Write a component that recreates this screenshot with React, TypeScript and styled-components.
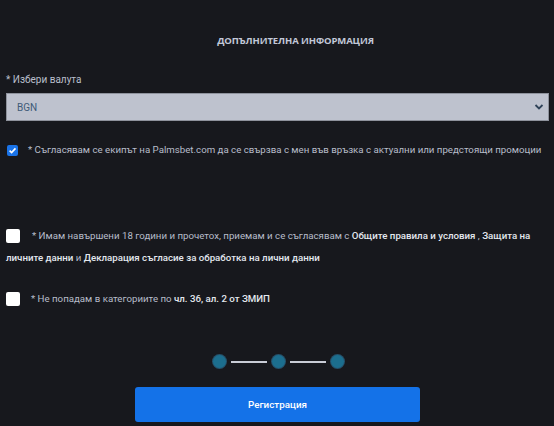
import React from "react";
import styled, { createGlobalStyle } from "styled-components";

const GlobalStyle = createGlobalStyle`
  html, body { margin: 0; padding: 0; background: #17181d; }
  body { font-family: Roboto, "Open Sans", sans-serif; }
`;

const Page = styled.div`
  width: 554px;
  height: 426px;
  box-sizing: border-box;
  padding: 0 5px 0 6px;
  display: flex;
  flex-direction: column;
  overflow: hidden;
`;

const Title = styled.div`
  margin-top: 34px;
  padding-left: 36px;
  text-align: center;
  font-family: "Open Sans", sans-serif;
  font-size: 9.5px;
  font-weight: 700;
  color: #c2c8d8;
  line-height: 14px;
  letter-spacing: -0.1px;
`;

const Label = styled.div`
  margin-top: 25px;
  font-size: 10px;
  line-height: 14px;
  color: #b9bfcc;
`;

const Select = styled.div`
  margin-top: 6px;
  height: 28px;
  box-sizing: border-box;
  border: 1px solid #8e929c;
  background: #bec2ce;
  display: flex;
  align-items: center;
  justify-content: space-between;
  padding: 0 4px 0 10px;
  font-size: 10px;
  color: #3f5b78;
`;

const Row = styled.div<{ $top: number; $gap: number }>`
  margin-top: ${(p) => p.$top}px;
  display: flex;
  align-items: center;
  gap: ${(p) => p.$gap}px;
  font-size: 9.7px;
  line-height: 14px;
  color: #b7bdca;
  white-space: nowrap;
`;

const Box = styled.span<{ $checked?: boolean }>`
  flex: none;
  width: ${(p) => (p.$checked ? 11 : 14)}px;
  height: ${(p) => (p.$checked ? 11 : 14)}px;
  margin-left: ${(p) => (p.$checked ? 1 : 0)}px;
  border-radius: 2px;
  background: ${(p) => (p.$checked ? "#1a73e8" : "#ffffff")};
  display: flex;
  align-items: center;
  justify-content: center;
`;

const Second = styled.div`
  margin-top: 8px;
  font-size: 9.7px;
  line-height: 14px;
  color: #b7bdca;
  white-space: nowrap;
`;

const B = styled.b`
  font-weight: 500;
  color: #e4e8ef;
`;

const Steps = styled.div`
  margin-top: 49px;
  padding-left: 2px;
  display: flex;
  align-items: center;
  justify-content: center;
`;

const Dot = styled.span`
  width: 13px;
  height: 13px;
  border-radius: 50%;
  background: #1c6e8e;
  box-shadow: 0 0 0 1px #26506a;
`;

const Line = styled.span`
  width: 36px;
  height: 2px;
  background: #c9ccd6;
  margin: 0 5px;
`;

const Button = styled.div`
  margin: 19px 0 0 129px;
  width: 285px;
  height: 35px;
  border-radius: 3px;
  background: #1472e8;
  color: #ffffff;
  font-size: 9.8px;
  font-weight: 500;
  display: flex;
  align-items: center;
  justify-content: center;
`;

export default function App() {
  return (
    <>
      <GlobalStyle />
      <Page>
        <Title>ДОПЪЛНИТЕЛНА ИНФОРМАЦИЯ</Title>
        <Label>* Избери валута</Label>
        <Select>
          <span>BGN</span>
          <svg width="10" height="8" viewBox="0 0 10 8">
            <path d="M1.5 2 L5 5.5 L8.5 2" stroke="#2f4258" strokeWidth="1.8" fill="none" />
          </svg>
        </Select>
        <Row $top={22} $gap={10}>
          <Box $checked>
            <svg width="9" height="9" viewBox="0 0 10 10">
              <path d="M1.8 5.2 L4 7.3 L8.3 2.6" stroke="#fff" strokeWidth="1.8" fill="none" />
            </svg>
          </Box>
          <span>* Съгласявам се екипът на Palmsbet.com да се свързва с мен във връзка с актуални или предстоящи промоции</span>
        </Row>
        <Row $top={72} $gap={12}>
          <Box />
          <span>
            * Имам навършени 18 години и прочетох, приемам и се съгласявам с <B>Общите правила и условия</B> , <B>Защита на</B>
          </span>
        </Row>
        <Second>
          <B>личните данни</B> и <B>Декларация съгласие за обработка на лични данни</B>
        </Second>
        <Row $top={27} $gap={11}>
          <Box />
          <span>
            * Не попадам в категориите по <B>чл. 36, ал. 2 от ЗМИП</B>
          </span>
        </Row>
        <Steps>
          <Dot />
          <Line />
          <Dot />
          <Line />
          <Dot />
        </Steps>
        <Button>Регистрация</Button>
      </Page>
    </>
  );
}
